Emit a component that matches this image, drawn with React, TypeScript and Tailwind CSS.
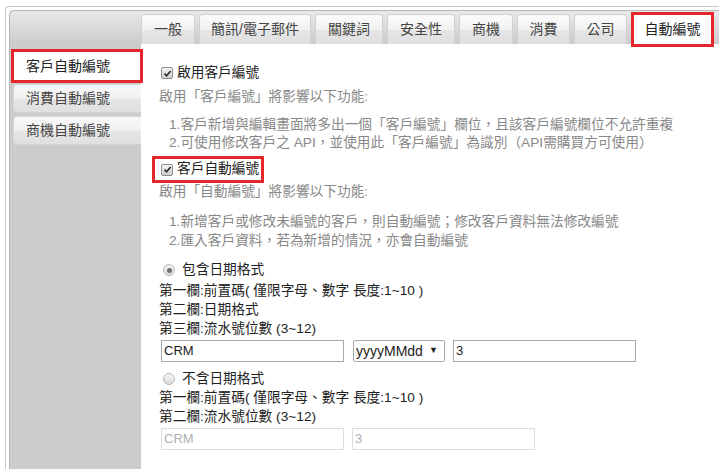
import React from "react";

const tabs = [
  { label: "一般", w: "w-[54px]" },
  { label: "簡訊/電子郵件", w: "w-[112px]" },
  { label: "關鍵詞", w: "w-[68px]" },
  { label: "安全性", w: "w-[68px]" },
  { label: "商機", w: "w-[54px]" },
  { label: "消費", w: "w-[53px]" },
  { label: "公司", w: "w-[53px]" },
];

const CheckBox: React.FC = () => (
  <span className="flex h-3 w-3 flex-shrink-0 items-center justify-center rounded-[2px] border border-[#8e8e8e] bg-gradient-to-b from-[#f6f6f6] to-[#cdcdcd]">
    <svg viewBox="0 0 10 10" className="h-[9px] w-[9px]">
      <path d="M1.6 5.2 L4 7.6 L8.5 2.2" fill="none" stroke="#2e2e2e" strokeWidth="1.9" />
    </svg>
  </span>
);

const Radio: React.FC<{ checked?: boolean }> = ({ checked }) => (
  <span className="flex h-3 w-3 flex-shrink-0 items-center justify-center rounded-full border border-[#b8b8b8] bg-gradient-to-b from-[#f7f7f7] to-[#d9d9d9]">
    {checked && <span className="h-[5px] w-[5px] rounded-full bg-[#6e6e6e]" />}
  </span>
);

export default function App() {
  return (
    <div className="h-[469px] w-[719px] overflow-hidden bg-white font-['Liberation_Sans','Noto_Sans_CJK_TC',sans-serif] text-[14px] text-[#333]">
      <div className="h-full pl-[5px] pt-[6px]">
        <div className="h-full rounded-tl-[4px] border-l border-t border-[#c6c6c6] pl-[3px] pt-[3px]">
          <div className="flex h-full flex-col rounded-tl-[5px] border-l border-t border-[#b7b7b7] bg-[#cccccc]">
            {/* tab bar */}
            <div className="flex h-[33px] flex-shrink-0 items-end gap-1 rounded-tl-[5px] bg-gradient-to-b from-[#e9e9e9] to-[#cbcbcb] pl-[131px]">
              {tabs.map((t) => (
                <div
                  key={t.label}
                  className={`${t.w} flex h-[30px] flex-shrink-0 items-center justify-center rounded-t-[4px] border border-b-0 border-[#d2d2d2] bg-[linear-gradient(#fbfbfb_0%,#f2f2f2_50%,#e6e6e6_51%,#dfdfdf_100%)] text-[#444]`}
                >
                  {t.label}
                </div>
              ))}
              <div className="relative z-10 -mb-[3px] flex h-[35px] w-[83px] flex-shrink-0 items-center justify-center border-[3px] border-[#e5262d] bg-white text-[#222]">
                自動編號
              </div>
            </div>

            <div className="flex flex-1">
              {/* sidebar */}
              <div className="w-[131px] flex-shrink-0 pt-[5px]">
                <div className="relative z-10 ml-[1px] flex h-[34px] w-[132px] items-center border-[3px] border-[#e5262d] bg-white pl-[12px] text-[#222]">
                  客戶自動編號
                </div>
                <div className="ml-[3px] mt-[1px] flex h-[29px] w-[128px] items-center rounded-l-[4px] border border-r-0 border-[#d4d4d4] bg-[linear-gradient(#f8f8f8_0%,#f0f0f0_50%,#e6e6e6_51%,#e0e0e0_100%)] pl-[12px] text-[#444]">
                  消費自動編號
                </div>
                <div className="ml-[3px] mt-[3px] flex h-[29px] w-[128px] items-center rounded-l-[4px] border border-r-0 border-[#d4d4d4] bg-[linear-gradient(#f8f8f8_0%,#f0f0f0_50%,#e6e6e6_51%,#e0e0e0_100%)] pl-[12px] text-[#444]">
                  商機自動編號
                </div>
              </div>

              {/* content */}
              <div className="flex-1 bg-white pl-[18px] pt-[19px] text-[13.7px]">
                <div className="flex h-[20px] items-center gap-[4px] pl-[2px] text-[#222]">
                  <CheckBox />
                  <span>啟用客戶編號</span>
                </div>
                <div className="mt-[4px] leading-[20px] text-[#888]">啟用「客戶編號」將影響以下功能:</div>
                <div className="mt-[9px] pl-[10px] leading-[18px] text-[#888]">
                  <div>1.客戶新增與編輯畫面將多出一個「客戶編號」欄位，且該客戶編號欄位不允許重複</div>
                  <div>2.可使用修改客戶之 API，並使用此「客戶編號」為識別（API需購買方可使用）</div>
                </div>

                <div className="-ml-[7px] mt-[4px] flex h-[27px] w-[112px] items-center gap-[4px] whitespace-nowrap border-[3px] border-[#e5262d] pl-[6px] text-[#222]">
                  <CheckBox />
                  <span>客戶自動編號</span>
                </div>
                <div className="leading-[18px] text-[#888]">啟用「自動編號」將影響以下功能:</div>
                <div className="mt-[11px] pl-[10px] leading-[19px] text-[#888]">
                  <div>1.新增客戶或修改未編號的客戶，則自動編號；修改客戶資料無法修改編號</div>
                  <div>2.匯入客戶資料，若為新增的情況，亦會自動編號</div>
                </div>

                <div className="ml-[4px] mt-[11px] flex h-[18px] items-center gap-[7px] text-[#222]">
                  <Radio checked />
                  <span>包含日期格式</span>
                </div>
                <div className="mt-[2px] leading-[19px] text-[#222]">
                  <div>第一欄:前置碼( 僅限字母、數字 長度:1~10 )</div>
                  <div>第二欄:日期格式</div>
                  <div>第三欄:流水號位數 (3~12)</div>
                </div>
                <div className="ml-[2px] mt-[2px] flex items-center">
                  <div className="flex h-[22px] w-[183px] items-center border border-[#a9a9a9] pl-[2px] text-[13px] text-[#222]">CRM</div>
                  <div className="ml-[9px] flex h-[22px] w-[92px] items-center gap-[6px] rounded-[2px] border border-[#a9a9a9] pl-[2px] text-[14px] text-[#222]">
                    <span>yyyyMMdd</span>
                    <span className="text-[9px]">▼</span>
                  </div>
                  <div className="ml-[8px] flex h-[22px] w-[183px] items-center border border-[#a9a9a9] pl-[2px] text-[13px] text-[#222]">3</div>
                </div>

                <div className="ml-[4px] mt-[8px] flex h-[18px] items-center gap-[7px] text-[#222]">
                  <Radio />
                  <span>不含日期格式</span>
                </div>
                <div className="leading-[19px] text-[#222]">
                  <div>第一欄:前置碼( 僅限字母、數字 長度:1~10 )</div>
                  <div>第二欄:流水號位數 (3~12)</div>
                </div>
                <div className="ml-[2px] mt-[2px] flex items-center">
                  <div className="flex h-[22px] w-[183px] items-center border border-[#dcdcdc] pl-[2px] text-[13px] text-[#b0b0b0]">CRM</div>
                  <div className="ml-[8px] flex h-[22px] w-[183px] items-center border border-[#dcdcdc] pl-[2px] text-[13px] text-[#b0b0b0]">3</div>
                </div>
              </div>
            </div>
          </div>
        </div>
      </div>
    </div>
  );
}
